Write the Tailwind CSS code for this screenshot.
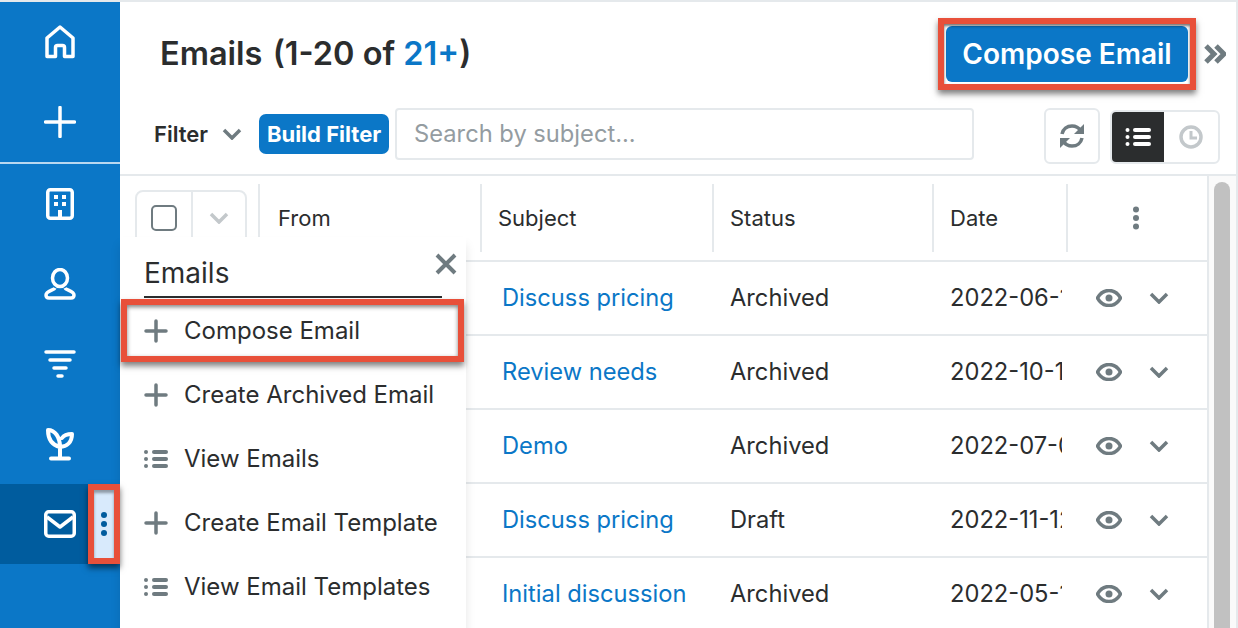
<!DOCTYPE html>
<html lang="en">
<head>
  <meta charset="UTF-8">
  <title>Emails</title>
  <script src="https://cdn.jsdelivr.net/npm/@tailwindcss/browser@4"></script>
</head>
<body class="bg-white font-['Inter',sans-serif] text-[#2b2d2e]">
  <div class="relative w-[1238px] h-[628px] overflow-hidden border-t-2 border-[#e5e9ec]">
    <div class="flex h-full">
      <!-- Sidebar -->
      <nav class="w-[120px] shrink-0 bg-[#0b77c7] flex flex-col text-white">
        <div class="h-[80px] flex items-center justify-center">
          <svg width="32" height="36" viewBox="0 0 32 36" fill="none" stroke="white" stroke-width="3.500" stroke-linejoin="round"><path d="M3 14 16 3l13 11v18.500h-8.500V23.500a2 2 0 0 0-2-2h-5a2 2 0 0 0-2 2v9H3z"/></svg>
        </div>
        <div class="h-[80px] flex items-center justify-center">
          <svg width="32" height="32" viewBox="0 0 32 32" fill="none" stroke="white" stroke-width="3.500" stroke-linecap="round"><path d="M16 1.500v29M1.500 16h29"/></svg>
        </div>
        <div class="h-[2px] bg-[#b9d8f0]"></div>
        <div class="h-[80px] flex items-center justify-center">
          <svg width="28" height="32" viewBox="0 0 28 32" fill="none" stroke="white" stroke-width="3.500"><rect x="1.750" y="1.750" width="24.500" height="28.500" rx="2.500"/><path fill="white" stroke="none" d="M8 7h4v4H8zM16 7h4v4h-4zM8 14h4v4H8zM16 14h4v4h-4zM12 22h4v8h-4z"/></svg>
        </div>
        <div class="h-[80px] flex items-center justify-center">
          <svg width="32" height="32" viewBox="0 0 32 32" fill="none" stroke="white" stroke-width="3.500" stroke-linejoin="round"><ellipse cx="16" cy="10" rx="7.500" ry="8.500"/><path d="M11 20c-1 2-9 3-9 7 0 2 1 3 3 3h22c2 0 3-1 3-3 0-4-8-5-9-7"/></svg>
        </div>
        <div class="h-[80px] flex items-center justify-center">
          <svg width="32" height="28" viewBox="0 0 32 28" fill="none" stroke="white" stroke-width="3.500" stroke-linecap="round"><path d="M2 2h28M6 10h20M10 18h12M14 26h4"/></svg>
        </div>
        <div class="h-[80px] flex items-center justify-center">
          <svg width="28" height="34" viewBox="0 0 28 34" fill="none" stroke="white" stroke-width="4" stroke-linecap="round" stroke-linejoin="round"><path d="M14 31V20M5 31.500h18M14 20C14 10 9 3 2 3c0 9 4 15 12 17ZM14 20c7 0 12-5 12-13-4 0-8 1-10 4"/></svg>
        </div>
        <div class="h-[80px] bg-[#005c9e] flex items-center">
          <div class="w-[120px] flex items-center justify-center">
            <svg width="32" height="28" viewBox="0 0 32 28" fill="none" stroke="white" stroke-width="3.500" stroke-linejoin="round"><rect x="1.750" y="1.750" width="28.500" height="24.500" rx="3"/><path d="m3 7 13 10L29 7"/></svg>
          </div>
        </div>
      </nav>

      <!-- Main -->
      <main class="flex-1 min-w-0 flex flex-col border-r-2 border-[#e5e9ec]">
        <header class="h-[174px] shrink-0 border-b-2 border-[#e5e9ec] pl-[40px] pr-[10px]">
          <div class="h-[106px] flex items-center justify-between">
            <h1 class="text-[32.500px] leading-none font-semibold relative -top-[1px]">Emails <span class="ml-[2px]">(1-20 of <span class="text-[#0b77c7]">21+</span>)</span></h1>
            <div class="flex items-center relative -top-[1px]">
              <button class="w-[242px] h-[56px] bg-[#0b77c7] rounded-[6px] text-white text-[28px] font-semibold">Compose Email</button>
              <svg class="ml-[16px]" width="22" height="22" viewBox="0 0 22 22" fill="none" stroke="#6f7b80" stroke-width="5"><path d="m2 3 8 8-8 8M12 3l8 8-8 8"/></svg>
            </div>
          </div>
          <div class="flex items-start -ml-[6px]">
            <div class="h-[52px] flex items-center text-[22px] font-semibold">Filter
              <svg class="ml-[14px]" width="20" height="12" viewBox="0 0 20 12" fill="none" stroke="#6f7b80" stroke-width="3.500"><path d="m2 2 8 8 8-8"/></svg>
            </div>
            <button class="ml-[17px] mt-[6px] w-[130px] h-[40px] bg-[#0b77c7] rounded-[7px] text-white text-[22px] font-bold">Build Filter</button>
            <div class="ml-[6px] w-[579px] h-[52px] border-2 border-[#e5e9ec] rounded-[4px] flex items-center pl-[17px] text-[23.700px] text-[#949ca1]">Search by subject...</div>
            <button class="ml-[70px] w-[56px] h-[56px] border-2 border-[#e5e9ec] rounded-[6px] flex items-center justify-center">
              <svg width="26" height="26" viewBox="0 0 26 26" fill="none" stroke="#6f7b80" stroke-width="3.500"><path d="M3 11c1-5 5-8 10-8 4 0 7 2 9 5"/><path fill="#6f7b80" stroke="none" d="M25 1v10H15z"/><path d="M23 15c-1 5-5 8-10 8-4 0-7-2-9-5"/><path fill="#6f7b80" stroke="none" d="M1 25V15h10z"/></svg>
            </button>
            <div class="ml-[10px] w-[110px] h-[54px] mt-[2px] border-2 border-[#e5e9ec] rounded-[6px] flex overflow-hidden">
              <div class="w-[52px] bg-[#2b2d2e] flex items-center justify-center">
                <svg width="26" height="20" viewBox="0 0 26 20" fill="white"><circle cx="2.500" cy="3" r="2"/><circle cx="2.500" cy="10" r="2"/><circle cx="2.500" cy="17" r="2"/><rect x="8" y="1" width="18" height="4" rx="2"/><rect x="8" y="8" width="18" height="4" rx="2"/><rect x="8" y="15" width="18" height="4" rx="2"/></svg>
              </div>
              <div class="flex-1 flex items-center justify-center">
                <svg width="24" height="24" viewBox="0 0 24 24" fill="none" stroke="#c3c8cb" stroke-width="3.500"><circle cx="12" cy="12" r="10"/><path d="M12 6v7h6" stroke-width="3"/></svg>
              </div>
            </div>
          </div>
        </header>

        <div class="flex-1 flex min-h-0">
          <!-- Table -->
          <div class="w-[1087px] shrink-0 overflow-hidden">
            <div class="grid grid-cols-[360px_232px_220px_134px_140px] h-[86px] border-b-2 border-[#e5e9ec] text-[22px] items-center">
              <div class="flex items-center h-full">
                <div class="ml-[15px] w-[112px] h-[56px] border-2 border-[#e5e9ec] rounded-[8px] flex">
                  <div class="w-[56px] border-r-2 border-[#e5e9ec] flex items-center justify-center">
                    <div class="w-[26px] h-[26px] border-2 border-[#6f7b80] rounded-[5px]"></div>
                  </div>
                  <div class="flex-1 flex items-center justify-center">
                    <svg width="20" height="12" viewBox="0 0 20 12" fill="none" stroke="#c3c8cb" stroke-width="3.500"><path d="m2 2 8 8 8-8"/></svg>
                  </div>
                </div>
                <div class="ml-[11px] h-[68px] border-l-2 border-[#e5e9ec] flex items-center pl-[18px]">From</div>
              </div>
              <div class="h-[68px] border-l-2 border-[#e5e9ec] flex items-center pl-[16px]">Subject</div>
              <div class="h-[68px] border-l-2 border-[#e5e9ec] flex items-center pl-[16px]">Status</div>
              <div class="h-[68px] border-l-2 border-[#e5e9ec] flex items-center pl-[16px]">Date</div>
              <div class="h-[68px] border-l-2 border-[#e5e9ec] flex items-center pl-[64px]">
                <svg width="8" height="24" viewBox="0 0 8 24" fill="#6f7b80"><circle cx="4" cy="3.500" r="3"/><circle cx="4" cy="12" r="3"/><circle cx="4" cy="20.500" r="3"/></svg>
              </div>
            </div>
            <div class="grid grid-cols-[382px_228px_220px_112px_145px] h-[74px] border-b-2 border-[#e5e9ec] text-[23.700px] items-center">
              <div></div><a class="text-[#0b77c7]">Discuss pricing</a><div>Archived</div><div class="overflow-hidden whitespace-nowrap">2022-06-12</div>
              <div class="flex items-center pl-[34px] gap-[27px]">
                <svg width="26" height="18" viewBox="0 0 26 18" fill="none" stroke="#6f7b80" stroke-width="3.500"><path d="M1.500 9C4 4.500 8 1.500 13 1.500S22 4.500 24.500 9C22 13.500 18 16.500 13 16.500S4 13.500 1.500 9Z"/><circle cx="13" cy="9" r="3.500" fill="#6f7b80" stroke="none"/></svg>
                <svg width="20" height="12" viewBox="0 0 20 12" fill="none" stroke="#6f7b80" stroke-width="3.500"><path d="m2 2 8 8 8-8"/></svg>
              </div>
            </div>
            <div class="grid grid-cols-[382px_228px_220px_112px_145px] h-[74px] border-b-2 border-[#e5e9ec] text-[23.700px] items-center">
              <div></div><a class="text-[#0b77c7]">Review needs</a><div>Archived</div><div class="overflow-hidden whitespace-nowrap">2022-10-12</div>
              <div class="flex items-center pl-[34px] gap-[27px]">
                <svg width="26" height="18" viewBox="0 0 26 18" fill="none" stroke="#6f7b80" stroke-width="3.500"><path d="M1.500 9C4 4.500 8 1.500 13 1.500S22 4.500 24.500 9C22 13.500 18 16.500 13 16.500S4 13.500 1.500 9Z"/><circle cx="13" cy="9" r="3.500" fill="#6f7b80" stroke="none"/></svg>
                <svg width="20" height="12" viewBox="0 0 20 12" fill="none" stroke="#6f7b80" stroke-width="3.500"><path d="m2 2 8 8 8-8"/></svg>
              </div>
            </div>
            <div class="grid grid-cols-[382px_228px_220px_112px_145px] h-[74px] border-b-2 border-[#e5e9ec] text-[23.700px] items-center">
              <div></div><a class="text-[#0b77c7]">Demo</a><div>Archived</div><div class="overflow-hidden whitespace-nowrap">2022-07-01</div>
              <div class="flex items-center pl-[34px] gap-[27px]">
                <svg width="26" height="18" viewBox="0 0 26 18" fill="none" stroke="#6f7b80" stroke-width="3.500"><path d="M1.500 9C4 4.500 8 1.500 13 1.500S22 4.500 24.500 9C22 13.500 18 16.500 13 16.500S4 13.500 1.500 9Z"/><circle cx="13" cy="9" r="3.500" fill="#6f7b80" stroke="none"/></svg>
                <svg width="20" height="12" viewBox="0 0 20 12" fill="none" stroke="#6f7b80" stroke-width="3.500"><path d="m2 2 8 8 8-8"/></svg>
              </div>
            </div>
            <div class="grid grid-cols-[382px_228px_220px_112px_145px] h-[74px] border-b-2 border-[#e5e9ec] text-[23.700px] items-center">
              <div></div><a class="text-[#0b77c7]">Discuss pricing</a><div>Draft</div><div class="overflow-hidden whitespace-nowrap">2022-11-12</div>
              <div class="flex items-center pl-[34px] gap-[27px]">
                <svg width="26" height="18" viewBox="0 0 26 18" fill="none" stroke="#6f7b80" stroke-width="3.500"><path d="M1.500 9C4 4.500 8 1.500 13 1.500S22 4.500 24.500 9C22 13.500 18 16.500 13 16.500S4 13.500 1.500 9Z"/><circle cx="13" cy="9" r="3.500" fill="#6f7b80" stroke="none"/></svg>
                <svg width="20" height="12" viewBox="0 0 20 12" fill="none" stroke="#6f7b80" stroke-width="3.500"><path d="m2 2 8 8 8-8"/></svg>
              </div>
            </div>
            <div class="grid grid-cols-[382px_228px_220px_112px_145px] h-[74px] border-b-2 border-[#e5e9ec] text-[23.700px] items-center">
              <div></div><a class="text-[#0b77c7]">Initial discussion</a><div>Archived</div><div class="overflow-hidden whitespace-nowrap">2022-05-12</div>
              <div class="flex items-center pl-[34px] gap-[27px]">
                <svg width="26" height="18" viewBox="0 0 26 18" fill="none" stroke="#6f7b80" stroke-width="3.500"><path d="M1.500 9C4 4.500 8 1.500 13 1.500S22 4.500 24.500 9C22 13.500 18 16.500 13 16.500S4 13.500 1.500 9Z"/><circle cx="13" cy="9" r="3.500" fill="#6f7b80" stroke="none"/></svg>
                <svg width="20" height="12" viewBox="0 0 20 12" fill="none" stroke="#6f7b80" stroke-width="3.500"><path d="m2 2 8 8 8-8"/></svg>
              </div>
            </div>
          </div>
          <!-- Scrollbar -->
          <div class="w-[29px] shrink-0 border-l-2 border-[#e5e9ec] bg-[#fafafa] pl-[5px] pt-[6px]">
            <div class="w-[16px] h-[500px] rounded-full bg-[#c1c1c1]"></div>
          </div>
        </div>
      </main>
    </div>

    <!-- Module menu -->
    <div class="absolute left-[120px] top-[235px] w-[346px] h-[398px] bg-white shadow-[0_8px_10px_rgba(0,0,0,0.10)] px-[24px] text-[#2b2d2e]">
      <div class="h-[61px] w-[298px] border-b-2 border-[#2b2d2e] text-[28px] flex items-center pt-[13px]">Emails</div>
      <svg class="absolute right-[9px] top-[16px]" width="22" height="22" viewBox="0 0 22 22" fill="none" stroke="#6f7b80" stroke-width="4"><path d="m2 2 18 18M20 2 2 20"/></svg>
      <div class="text-[24px] pt-[1px]">
        <div class="h-[64px] flex items-center gap-[16px]">
          <svg width="24" height="24" viewBox="0 0 24 24" fill="none" stroke="#6f7b80" stroke-width="3.500" stroke-linecap="round"><path d="M12 2v20M2 12h20"/></svg>Compose Email
        </div>
        <div class="h-[64px] flex items-center gap-[16px]">
          <svg width="24" height="24" viewBox="0 0 24 24" fill="none" stroke="#6f7b80" stroke-width="3.500" stroke-linecap="round"><path d="M12 2v20M2 12h20"/></svg>Create Archived Email
        </div>
        <div class="h-[64px] flex items-center gap-[16px]">
          <svg width="24" height="20" viewBox="0 0 24 20" fill="#6f7b80"><circle cx="2" cy="3" r="2"/><circle cx="2" cy="10" r="2"/><circle cx="2" cy="17" r="2"/><rect x="8" y="1" width="16" height="4" rx="2"/><rect x="8" y="8" width="16" height="4" rx="2"/><rect x="8" y="15" width="16" height="4" rx="2"/></svg>View Emails
        </div>
        <div class="h-[64px] flex items-center gap-[16px]">
          <svg width="24" height="24" viewBox="0 0 24 24" fill="none" stroke="#6f7b80" stroke-width="3.500" stroke-linecap="round"><path d="M12 2v20M2 12h20"/></svg>Create Email Template
        </div>
        <div class="h-[64px] flex items-center gap-[16px]">
          <svg width="24" height="20" viewBox="0 0 24 20" fill="#6f7b80"><circle cx="2" cy="3" r="2"/><circle cx="2" cy="10" r="2"/><circle cx="2" cy="17" r="2"/><rect x="8" y="1" width="16" height="4" rx="2"/><rect x="8" y="8" width="16" height="4" rx="2"/><rect x="8" y="15" width="16" height="4" rx="2"/></svg>View Email Templates
        </div>
      </div>
    </div>

    <!-- Kebab trigger on the active nav item -->
    <div class="absolute left-[88px] top-[482px] w-[32px] h-[80px] border-[6px] border-[#e8503a] bg-[#d8eafc] shadow-[0_4px_6px_rgba(0,0,0,0.55),inset_0_3px_3px_rgba(0,0,0,0.35)] flex flex-col items-center justify-center gap-[3px]">
      <span class="w-[6px] h-[6px] rounded-full bg-[#005c9e]"></span>
      <span class="w-[6px] h-[6px] rounded-full bg-[#005c9e]"></span>
      <span class="w-[6px] h-[6px] rounded-full bg-[#005c9e]"></span>
    </div>
    <!-- Red callouts -->
    <div class="absolute left-[938px] top-[16px] w-[258px] h-[72px] border-[6px] border-[#e8503a] shadow-[0_4px_6px_rgba(0,0,0,0.5),inset_0_2px_3px_rgba(0,0,0,0.55)]"></div>
    <div class="absolute left-[121px] top-[297px] w-[343px] h-[63px] border-[6px] border-[#e8503a] shadow-[0_4px_6px_rgba(0,0,0,0.5),inset_0_2px_4px_rgba(0,0,0,0.5)]"></div>
  </div>
</body>
</html>
